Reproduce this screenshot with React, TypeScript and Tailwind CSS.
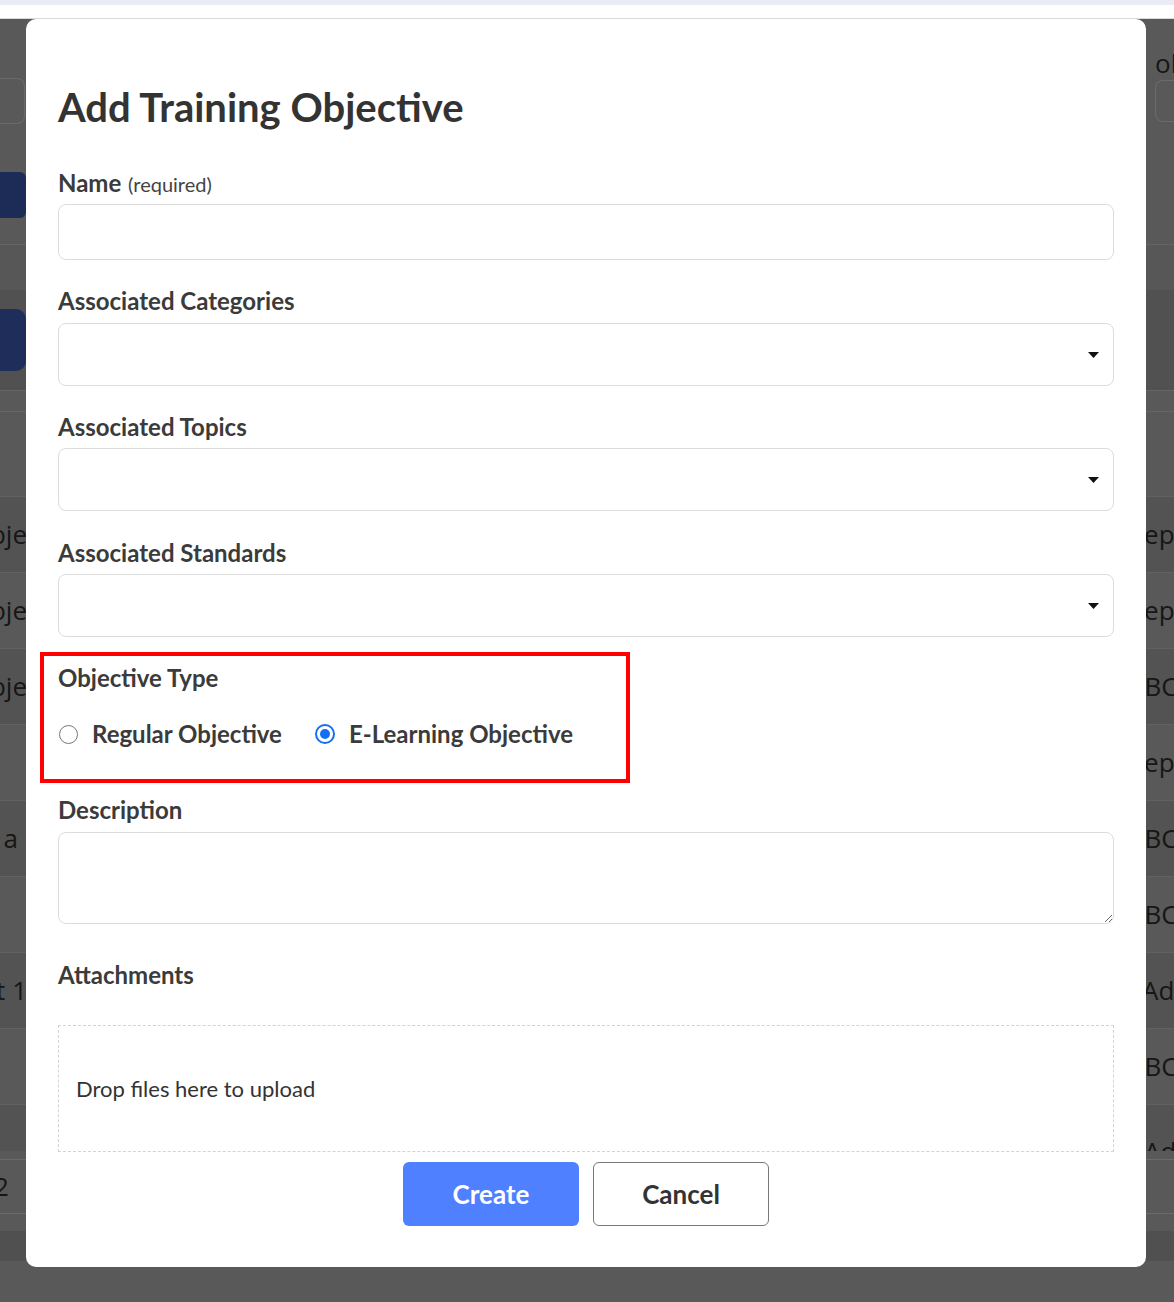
import React from 'react';

const ROWS = [
  { left: 'Obje', right: 'Rep', rpad: 'pl-[0px]', lpad: 'pr-[0px]' },
  { left: 'Obje', right: 'Rep', rpad: 'pl-[0px]', lpad: 'pr-[0px]' },
  { left: 'Obje', right: 'ABC', rpad: 'pl-[0px]', lpad: 'pr-[0px]' },
  { left: '', right: 'Repa', rpad: 'pl-[0px]', lpad: 'pr-[0px]' },
  { left: 'a', right: 'ABC', rpad: 'pl-[0px]', lpad: 'pr-[9px]' },
  { left: '', right: 'ABC', rpad: 'pl-[0px]', lpad: 'pr-[0px]' },
  { left: 't 1', right: 'Ad', rpad: 'pl-[14px]', lpad: 'pr-[0px]' },
  { left: '', right: 'ABC', rpad: 'pl-[0px]', lpad: 'pr-[0px]' },
];

function Caret() {
  return (
    <svg width="11" height="6" viewBox="0 0 11 6">
      <path d="M0 0 L11 0 L5.5 6 Z" fill="#111" />
    </svg>
  );
}

function Label({ children }: { children: React.ReactNode }) {
  return <div className="text-[24px] font-bold leading-[28px] text-[#3b3b3b]">{children}</div>;
}

function Select() {
  return (
    <div className="mt-[7px] flex h-[63px] w-full items-center justify-end rounded-[8px] border border-[#dcdcdc] pr-[14px]">
      <Caret />
    </div>
  );
}

export default function App() {
  return (
    <div className="relative h-[1302px] w-full overflow-hidden bg-[#595959] font-['Lato',sans-serif]">
      {/* page behind the modal, dimmed */}
      <div className="h-[5px] bg-[#e8edf5]" />
      <div className="h-[14px] border-b border-[#d9d9d9] bg-white" />

      <div className="font-['Open_Sans',sans-serif] text-[26px] text-[#161616]">
        <div className="flex h-[59px] items-end justify-end">
          <span className="w-[19px] overflow-hidden whitespace-nowrap leading-[30px]">ol</span>
        </div>
        <div className="flex h-[49px] items-start justify-between">
          <div className="h-[46px] w-[25px] rounded-r-[8px] border border-l-0 border-[#6b6b6b]" />
          <div className="mt-[2px] h-[42px] w-[19px] rounded-l-[8px] border border-r-0 border-[#6b6b6b]" />
        </div>
        <div className="h-[45px]" />
        <div className="h-[46px]">
          <div className="h-full w-[26px] rounded-r-[6px] bg-[#1d2b57]" />
        </div>
        <div className="h-[27px] border-b border-[#666]" />
        <div className="h-[45px] bg-[#575757]" />
        <div className="flex h-[100px] items-center bg-[#515151]">
          <div className="h-[62px] w-[26px] rounded-r-[10px] bg-[#1e2d5a]" />
        </div>
        <div className="h-[22px] border-y border-[#666]" />
        <div className="h-[84px]" />

        {ROWS.map((row, i) => (
          <div
            key={i}
            className={`flex h-[76px] items-center justify-between border-t border-[#626262] ${i % 2 === 0 ? 'bg-[#535353]' : 'bg-[#595959]'}`}
          >
            <div className={`flex w-[27px] justify-end overflow-hidden whitespace-nowrap ${row.lpad}`}>{row.left}</div>
            <div className={`w-[46px] overflow-hidden whitespace-nowrap ${row.rpad}`}>{row.right}</div>
          </div>
        ))}
        <div className="flex h-[47px] items-end justify-end overflow-hidden border-t border-[#626262] bg-[#535353]">
          <div className="-mb-[20px] w-[46px] whitespace-nowrap pl-[16px]">Ad</div>
        </div>
        <div className="h-[8px]" />
        <div className="flex h-[55px] items-center border-y border-[#6a6a6a]">
          <span className="-ml-[6px]">2</span>
        </div>
        <div className="h-[17px]" />
        <div className="h-[30px] bg-[#505050]" />
      </div>

      {/* modal */}
      <div className="absolute left-[26px] top-[19px] w-[1120px] rounded-[10px] bg-white px-[32px] pb-[41px] pt-[64px] text-[#333]">
        <h1 className="text-[40px] font-bold leading-[48px] text-[#333]">Add Training Objective</h1>

        <div className="mt-[38px]">
          <Label>
            Name <span className="ml-[1px] text-[20px] font-normal text-[#444]">(required)</span>
          </Label>
          <div className="mt-[6px] h-[56px] w-full rounded-[8px] border border-[#dcdcdc]" />
        </div>

        <div className="mt-[27px]">
          <Label>Associated Categories</Label>
          <div className="mt-[8px] flex h-[63px] w-full items-center justify-end rounded-[8px] border border-[#dcdcdc] pr-[14px]">
            <Caret />
          </div>
        </div>

        <div className="mt-[27px]">
          <Label>Associated Topics</Label>
          <Select />
        </div>

        <div className="mt-[28px]">
          <Label>Associated Standards</Label>
          <Select />
        </div>

        <div className="-ml-[18px] mt-[15px] w-[590px] border-4 border-[#ff0000] pb-[31px] pl-[14px] pt-[8px]">
          <Label>Objective Type</Label>
          <div className="mt-[28px] flex items-center text-[24px] font-bold leading-[28px] text-[#3b3b3b]">
            <span className="ml-[1px] h-[19px] w-[19px] rounded-full border border-[#767676]" />
            <span className="ml-[14px]">Regular Objective</span>
            <span className="ml-[33px] flex h-[20px] w-[20px] items-center justify-center rounded-full border-2 border-[#1470f0]">
              <span className="h-[10px] w-[10px] rounded-full bg-[#1470f0]" />
            </span>
            <span className="ml-[14px]">E-Learning Objective</span>
          </div>
        </div>

        <div className="mt-[13px]">
          <Label>Description</Label>
          <textarea className="mt-[8px] block h-[92px] w-full rounded-[8px] border border-[#dcdcdc] outline-none" />
        </div>

        <div className="mt-[37px]">
          <Label>Attachments</Label>
          <div className="mt-[36px] flex h-[127px] items-center border border-dashed border-[#d3d3d3] px-[17px] text-[22px] text-[#333]">
            Drop files here to upload
          </div>
        </div>

        <div className="mt-[10px] flex justify-center gap-[14px]">
          <button className="h-[64px] w-[176px] rounded-[6px] bg-[#4f80ff] text-[26px] font-bold text-white">Create</button>
          <button className="h-[64px] w-[176px] rounded-[6px] border border-[#777] bg-white text-[26px] font-bold text-[#333]">
            Cancel
          </button>
        </div>
      </div>
    </div>
  );
}
